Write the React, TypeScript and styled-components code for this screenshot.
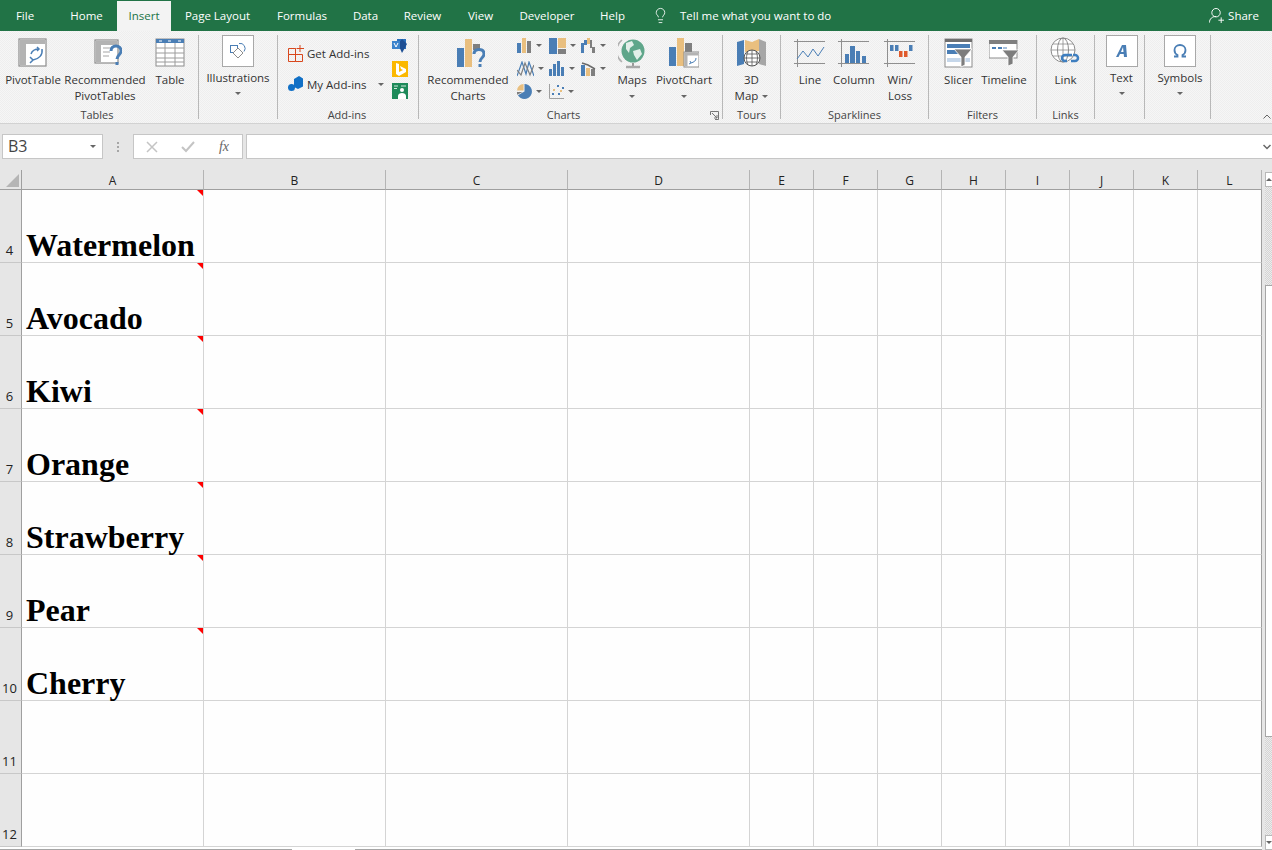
import React from "react"
import styled, { createGlobalStyle } from "styled-components"
import { Lightbulb } from "lucide-react"

const UI_FONT = `"Open Sans", "Noto Sans", "Liberation Sans", sans-serif`
const BLUE = "#4a7eb5"
const GOLD = "#e9bf7f"
const GREY = "#7f7f7f"

const Global = createGlobalStyle`
  html, body {
    margin: 0;
    padding: 0;
    background: #e6e6e6;
  }
  * {
    box-sizing: border-box;
  }
  svg {
    flex: none;
  }
`

const Window = styled.div`
  width: 1272px;
  height: 850px;
  overflow: hidden;
  display: flex;
  flex-direction: column;
  font-family: ${UI_FONT};
  font-size: 11.5px;
  color: #333;
`

/* title tabs */

const TabBar = styled.div`
  height: 31px;
  flex: none;
  background: #217346;
  display: flex;
  align-items: stretch;
  padding-top: 1px;
  color: #fff;
`

const Tab = styled.div<{ $w: number; $active?: boolean }>`
  width: ${(p) => p.$w}px;
  display: flex;
  align-items: center;
  justify-content: center;
  padding-bottom: 1px;
  white-space: nowrap;
  background: ${(p) => (p.$active ? "#f3f3f3" : "transparent")};
  color: ${(p) => (p.$active ? "#217346" : "#fff")};
`

const FileTab = styled(Tab)`
  padding-right: 6px;
`

const TellMe = styled.div`
  display: flex;
  align-items: center;
  gap: 11px;
  margin-left: 14px;
  padding-bottom: 1px;
  flex: 1;
`

const Share = styled.div`
  display: flex;
  align-items: center;
  gap: 4px;
  padding: 0 13px 1px 0;
`

/* ribbon */

const Ribbon = styled.div`
  height: 93px;
  flex: none;
  display: flex;
  padding-top: 4px;
  position: relative;
  border-bottom: 1px solid #d2d2d2;
  background-color: #f4f4f4;
  background-image: repeating-conic-gradient(#eeeeee 0 25%, #f6f6f6 0 50%);
  background-size: 2px 2px;
`

const Group = styled.div<{ $w: number }>`
  width: ${(p) => p.$w}px;
  height: 84px;
  flex: none;
  display: flex;
  flex-direction: column;
  border-right: 1px solid #b8b8b8;
`

const GroupBody = styled.div`
  flex: 1;
  display: flex;
  min-height: 0;
`

const GroupLabel = styled.div<{ $pr?: number }>`
  height: 14px;
  line-height: 14px;
  margin-bottom: -3px;
  padding-right: ${(p) => p.$pr ?? 0}px;
  text-align: center;
  color: #444;
  font-size: 11px;
  position: relative;
`

const Launcher = styled.svg`
  position: absolute;
  right: 3px;
  top: 3px;
`

const CollapseChevron = styled.svg`
  position: absolute;
  right: 1px;
  top: 83px;
`

const BigButton = styled.div<{ $w: number }>`
  width: ${(p) => p.$w}px;
  flex: none;
  display: flex;
  flex-direction: column;
  align-items: center;
`

const IconSlot = styled.div<{ $shift?: number }>`
  height: 35px;
  padding-left: ${(p) => p.$shift ?? 0}px;
  display: flex;
  align-items: center;
  justify-content: center;
`

const ButtonLabel = styled.div`
  line-height: 16px;
  margin-top: 2px;
  text-align: center;
  white-space: nowrap;
`

const Caret = styled.span`
  display: inline-block;
  width: 0;
  height: 0;
  flex: none;
  border-left: 3px solid transparent;
  border-right: 3px solid transparent;
  border-top: 3px solid #666;
`

const CaretLine = styled.div`
  height: 16px;
  display: flex;
  align-items: center;
  justify-content: center;
`

const MapCaret = styled(Caret)`
  margin-left: 4px;
  vertical-align: middle;
`

const Collapsed = styled.div<{ $pl?: number }>`
  flex: 1;
  display: flex;
  flex-direction: column;
  align-items: center;
  padding-left: ${(p) => p.$pl ?? 0}px;
`

const CollapsedBox = styled.div`
  width: 32px;
  height: 32px;
  background: #fff;
  border: 1px solid #a8a8a8;
  display: flex;
  align-items: center;
  justify-content: center;
`

const CollapsedLabel = styled.div`
  margin-top: 3px;
  line-height: 16px;
`

const CollapsedCaret = styled(CaretLine)`
  height: 14px;
`

const StoreColumn = styled.div`
  width: 114px;
  flex: none;
  padding: 10px 0 0 10px;
  display: flex;
  flex-direction: column;
  gap: 15px;
`

const StoreRow = styled.div`
  height: 16px;
  display: flex;
  align-items: center;
  gap: 3px;
  white-space: nowrap;
`

const StoreCaret = styled(Caret)`
  margin-left: 8px;
`

const AppIcons = styled.div`
  display: flex;
  flex-direction: column;
  gap: 6.5px;
  margin-top: 3px;
`

const ChartGrid = styled.div`
  width: 93px;
  flex: none;
  display: grid;
  grid-template-columns: repeat(3, 32px);
  grid-auto-rows: 23px;
  margin-top: -1px;
`

const ChartCell = styled.div`
  display: flex;
  align-items: center;
  gap: 4px;
`

/* formula bar */

const FormulaBar = styled.div`
  height: 46px;
  flex: none;
  display: flex;
  align-items: flex-start;
  padding: 10px 0 0 2px;
  background: #e6e6e6;
`

const NameBox = styled.div`
  width: 101px;
  height: 25px;
  background: #fff;
  border: 1px solid #c6c6c6;
  display: flex;
  align-items: center;
  justify-content: space-between;
  padding: 0 6px 1px 5px;
  font-size: 16px;
  color: #444;
`

const Grip = styled.div`
  width: 30px;
  height: 25px;
  display: flex;
  flex-direction: column;
  align-items: center;
  justify-content: center;
  gap: 2px;
  flex: none;
  & > i {
    width: 2px;
    height: 2px;
    background: #a6a6a6;
  }
`

const FxBox = styled.div`
  width: 110px;
  height: 25px;
  background: #fff;
  border: 1px solid #c6c6c6;
  display: grid;
  grid-template-columns: repeat(3, 36px);
  align-items: center;
  justify-items: center;
  flex: none;
`

const Fx = styled.span`
  font-family: "Liberation Serif", serif;
  font-style: italic;
  font-size: 14px;
  color: #666;
`

const FormulaInput = styled.div`
  flex: 1;
  height: 25px;
  margin-left: 3px;
  background: #fff;
  border: 1px solid #c6c6c6;
  border-right: 0;
  display: flex;
  align-items: center;
  justify-content: flex-end;
  padding-right: 1px;
`

/* sheet */

const Sheet = styled.div`
  flex: 1;
  display: flex;
  min-height: 0;
`

const CellGrid = styled.div`
  width: 1262px;
  flex: none;
  display: grid;
  grid-template-columns: 22px repeat(4, 182px) repeat(8, 64px);
  grid-template-rows: 20px repeat(9, 73px) 3px;
  background: #fff;
`

const Corner = styled.div`
  background: #e6e6e6;
  border-right: 1px solid #9f9f9f;
  border-bottom: 1px solid #9f9f9f;
  position: relative;
  &::after {
    content: "";
    position: absolute;
    right: 2px;
    bottom: 2px;
    border-left: 13px solid transparent;
    border-bottom: 13px solid #b5b5b5;
  }
`

const ColHead = styled.div`
  background: #e6e6e6;
  border-bottom: 1px solid #9f9f9f;
  border-right: 1px solid #b4b4b4;
  text-align: center;
  padding-top: 1px;
  line-height: 19px;
  font-size: 12px;
  color: #222;
`

const RowHead = styled.div`
  background: #e6e6e6;
  border-right: 1px solid #9f9f9f;
  border-bottom: 1px solid #c8c8c8;
  display: flex;
  align-items: flex-end;
  justify-content: center;
  padding: 0 2px 2px 0;
  font-size: 13px;
  line-height: 19px;
  color: #222;
`

const Cell = styled.div<{ $last?: boolean }>`
  background: #fefefe;
  border-right: 1px solid ${(p) => (p.$last ? "#9f9f9f" : "#d4d4d4")};
  border-bottom: 1px solid #d4d4d4;
`

const NameCell = styled(Cell)`
  position: relative;
  display: flex;
  align-items: flex-end;
  padding-left: 4px;
  font-family: "Liberation Serif", serif;
  font-weight: bold;
  font-size: 32px;
  line-height: 34px;
  color: #000;
  white-space: nowrap;
  &::after {
    content: "";
    position: absolute;
    top: 0;
    right: 0;
    border-left: 6px solid transparent;
    border-top: 6px solid #ff0000;
  }
`

const BottomEdge = styled.div`
  grid-column: 1 / -1;
  display: flex;
  justify-content: space-between;
  background: #fff;
  padding-top: 2px;
`

const EdgeLine = styled.div<{ $w: number }>`
  height: 1px;
  background: #a6a6a6;
  width: ${(p) => p.$w}px;
`

const VScroll = styled.div`
  flex: 1;
  display: flex;
  flex-direction: column;
  padding: 2px 0 0 3px;
  background: #e6e6e6;
`

const Track = styled.div`
  height: 98px;
  flex: none;
  background-color: #dcdcdc;
  background-image: repeating-conic-gradient(#d4d4d4 0 25%, #ececec 0 50%);
  background-size: 2px 2px;
`

const Thumb = styled.div`
  height: 452px;
  flex: none;
  background: #fff;
  border: 1px solid #a6a6a6;
  border-right: 0;
`

const ScrollButton = styled.div`
  height: 15px;
  flex: none;
  background: #fff;
  border: 1px solid #b8b8b8;
  border-right: 0;
  display: flex;
  align-items: center;
  justify-content: center;
`

const ArrowUp = styled.span`
  border-left: 3px solid transparent;
  border-right: 3px solid transparent;
  border-bottom: 3px solid #666;
`

const ArrowDown = styled.span`
  border-left: 3px solid transparent;
  border-right: 3px solid transparent;
  border-top: 3px solid #666;
`

/* icons */

const PivotTableIcon = () => (
  <svg width="30" height="30" viewBox="0 0 30 30">
    <rect x="1" y="1" width="27" height="27" fill="#fff" stroke="#8c8c8c" strokeWidth="1.2" />
    <rect x="2" y="2" width="25" height="4" fill="#b3b3b3" />
    <rect x="2" y="6" width="6" height="21" fill="#b3b3b3" />
    <path d="M24 11c1 6-3 10-9 11M12 19l3 3-3 3" fill="none" stroke={BLUE} strokeWidth="1.5" />
    <path d="M13 16c1-3 4-5 8-5M19 9l2 2-2 2" fill="none" stroke={BLUE} strokeWidth="1.5" />
  </svg>
)

const RecommendedPivotIcon = () => (
  <svg width="28" height="28" viewBox="0 0 28 28">
    <rect x="1" y="1" width="23" height="23" fill="#fff" stroke="#8c8c8c" strokeWidth="1.2" />
    <rect x="2" y="2" width="21" height="4" fill="#b3b3b3" />
    <rect x="2" y="6" width="5" height="17" fill="#b3b3b3" />
    <path d="M9 9h9M9 13h7M9 17h6" stroke="#c4c4c4" strokeWidth="1.5" />
    <path d="M17 12c0-3 2-5 5-5s5 2 5 5c0 4-4 4-4 8" fill="none" stroke={BLUE} strokeWidth="3" />
    <rect x="21.5" y="23" width="3" height="3" fill={BLUE} />
  </svg>
)

const TableIcon = () => (
  <svg width="30" height="30" viewBox="0 0 30 30">
    <rect x="1" y="1" width="28" height="27" fill="#fff" stroke="#8c8c8c" />
    <rect x="1" y="1" width="28" height="4" fill={BLUE} />
    <path d="M4 3h3M13 3h3M23 3h3" stroke="#fff" strokeWidth="1" />
    <path d="M1 10h28M1 15h28M1 20h28M1 24h28M10 5v23M20 5v23" stroke="#9c9c9c" strokeWidth="1" />
  </svg>
)

const ShapesIcon = () => (
  <svg width="18" height="18" viewBox="0 0 18 18" fill="none" stroke={BLUE} strokeWidth="1">
    <rect x="1.5" y="3.5" width="7" height="7" />
    <path d="M10 1.5a5 5 0 0 1 5 8" />
    <path d="M9 6l5 5-5 5-5-5z" fill="#fff" stroke="#8c8c8c" />
  </svg>
)

const GetAddInsIcon = () => (
  <svg width="16" height="17" viewBox="0 0 16 17" fill="none" stroke="#d8471c" strokeWidth="1">
    <path d="M.5 3.500h7v6h-7zM.5 9.500h7v7h-7zM7.500 9.500h7v7h-7zM7.500 3.500v6" />
    <path d="M12 0v7M8.500 3.500H16" />
  </svg>
)

const MyAddInsIcon = () => (
  <svg width="16" height="16" viewBox="0 0 16 16">
    <path d="M6 3l5-3 4 2.500v8L10 13 6 11z" fill="#1170c6" />
    <circle cx="3.500" cy="11.500" r="3.500" fill="#1170c6" />
  </svg>
)

const VisioIcon = () => (
  <svg width="16" height="16" viewBox="0 0 16 16">
    <rect x="5" y="1" width="9" height="10" fill="#2a6fbb" />
    <path d="M6 6l4-5 5 5-5 9z" fill="#1d4f94" />
    <rect x="0" y="3" width="8" height="8" fill="#3b83cc" />
    <path d="M2 5l2 4 2-4" stroke="#fff" fill="none" strokeWidth="1" />
  </svg>
)

const BingIcon = () => (
  <svg width="16" height="16" viewBox="0 0 16 16">
    <rect width="16" height="16" fill="#fbb800" />
    <path d="M4 2l3 1v8l4-2-2-1-1-3 6 3v3l-7 4-3-2z" fill="#fff" />
  </svg>
)

const PeopleIcon = () => (
  <svg width="16" height="16" viewBox="0 0 16 16">
    <rect width="16" height="16" fill="#1e8a5a" />
    <path d="M2 3h4M2 5.500h3M9 3h5" stroke="#cfe7da" strokeWidth="1" />
    <circle cx="10" cy="7" r="2" fill="#fff" />
    <path d="M6 16v-3c0-2 2-3 4-3s4 1 4 3v3z" fill="#fff" />
  </svg>
)

const RecommendedChartsIcon = () => (
  <svg width="28" height="28" viewBox="0 0 28 28">
    <rect x="0" y="9" width="7" height="19" fill={BLUE} />
    <rect x="8" y="0" width="7" height="28" fill={GOLD} />
    <rect x="16" y="5" width="7" height="6" fill={GREY} />
    <path d="M17 15c0-3 2-4.500 5-4.500s5 1.500 5 4.500c0 4-4 3.500-4 8" fill="none" stroke={BLUE} strokeWidth="3" />
    <rect x="21.500" y="25" width="3" height="3" fill={BLUE} />
  </svg>
)

const ColumnMini = () => (
  <svg width="15" height="15" viewBox="0 0 15 15">
    <rect x="0" y="5" width="4" height="10" fill={BLUE} />
    <rect x="5" y="0" width="4" height="15" fill={GOLD} />
    <rect x="10" y="3" width="4" height="12" fill={GREY} />
  </svg>
)

const TreemapMini = () => (
  <svg width="17" height="16" viewBox="0 0 17 16">
    <rect x="0" y="0" width="8" height="16" fill={BLUE} />
    <rect x="9" y="0" width="8" height="10" fill={GOLD} />
    <rect x="9" y="11" width="8" height="5" fill={GREY} />
  </svg>
)

const WaterfallMini = () => (
  <svg width="15" height="15" viewBox="0 0 15 15">
    <rect x="0" y="5" width="3" height="10" fill={BLUE} />
    <rect x="3" y="2" width="3" height="5" fill={BLUE} />
    <rect x="6" y="0" width="3" height="6" fill={GOLD} />
    <rect x="9" y="2" width="2" height="8" fill={GREY} />
    <rect x="11" y="9" width="3" height="6" fill={GREY} />
  </svg>
)

const LineMini = () => (
  <svg width="17" height="16" viewBox="0 0 17 16" fill="none" strokeWidth="1.2">
    <path d="M0 15L5 1l4 12 3-12 5 14" stroke={BLUE} />
    <path d="M0 9l4 5L8 2l5 12 4-10" stroke={GREY} />
  </svg>
)

const BarsMini = () => (
  <svg width="16" height="15" viewBox="0 0 16 15">
    <rect x="0" y="8" width="3" height="7" fill={BLUE} />
    <rect x="4" y="3" width="3" height="12" fill={BLUE} />
    <rect x="8" y="0" width="3" height="15" fill={BLUE} />
    <rect x="12" y="6" width="3" height="9" fill={BLUE} />
  </svg>
)

const ComboMini = () => (
  <svg width="15" height="15" viewBox="0 0 15 15">
    <rect x="0" y="4" width="4" height="11" fill={BLUE} />
    <rect x="5" y="7" width="4" height="8" fill={GOLD} />
    <rect x="10" y="8" width="4" height="7" fill={GREY} />
    <path d="M1 2l6 2 7 4" stroke="#6a6a6a" strokeWidth="1.500" fill="none" />
  </svg>
)

const PieMini = () => (
  <svg width="15" height="15" viewBox="0 0 16 16">
    <path d="M8 0a8 8 0 1 1-7 12l7-4z" fill={BLUE} />
    <path d="M7 0v7H0a7 7 0 0 1 7-7z" fill={GOLD} />
    <path d="M0 8.500h6l-6 3z" fill={GREY} />
  </svg>
)

const ScatterMini = () => (
  <svg width="15" height="15" viewBox="0 0 15 15">
    <path d="M.5 0v14.500H15" stroke="#a0a0a0" fill="none" />
    <path d="M8 1h2v2H8zM3 9h2v2H3z" fill={BLUE} />
    <path d="M4 5h2v2H4zM11 6h2v2h-2z" fill={GOLD} />
    <path d="M9 9h2v2H9zM13 3h2v2h-2z" fill={BLUE} />
  </svg>
)

const GlobeIcon = () => (
  <svg width="28" height="32" viewBox="0 0 28 32">
    <path d="M4 3a14 14 0 0 0 0 22" fill="none" stroke="#b0b0b0" strokeWidth="1.500" />
    <circle cx="15" cy="14" r="11.500" fill="#5fa68a" />
    <path d="M8 6l6-2 2 4-4 3-1 5-3-4zM15 14l7-2 2 5-5 6-3-5z" fill="#e3efe9" />
    <path d="M15 26v3" stroke="#999" strokeWidth="2" />
    <path d="M8 30h14" stroke="#a8a8a8" strokeWidth="2.500" />
  </svg>
)

const PivotChartIcon = () => (
  <svg width="30" height="30" viewBox="0 0 30 30">
    <rect x="0" y="9" width="7" height="19" fill={BLUE} />
    <rect x="8" y="0" width="7" height="28" fill={GOLD} />
    <rect x="16" y="5" width="7" height="10" fill={GREY} />
    <rect x="15" y="14" width="15" height="15" fill="#fff" stroke="#8c8c8c" />
    <rect x="15.500" y="14.500" width="14" height="3" fill="#b3b3b3" />
    <rect x="15.500" y="14.500" width="3" height="14" fill="#b3b3b3" />
    <path d="M27 20c0 3-2 4-5 5M21 23l1 2-2 1" fill="none" stroke={BLUE} strokeWidth="1" />
  </svg>
)

const MapIcon = () => (
  <svg width="30" height="30" viewBox="0 0 30 30">
    <path d="M0 4l7-2v24l-7 2z" fill={BLUE} />
    <path d="M8 2l7 2v10H8z" fill={GOLD} />
    <path d="M15 4l7-3v12h-7z" fill={GOLD} />
    <path d="M22 1l7 3v24l-7-2z" fill="#a6a6a6" />
    <circle cx="15" cy="20" r="8" fill="#fff" stroke="#555" />
    <path d="M7 20h16M15 12v16M9 16h12M9 24h12M11 13.500c-2 4-2 9 0 13M19 13.500c2 4 2 9 0 13" fill="none" stroke="#555" strokeWidth=".8" />
  </svg>
)

const SparkFrame = ({ children }: { children: React.ReactNode }) => (
  <svg width="32" height="28" viewBox="0 0 32 28">
    <path d="M0 2.500h31M0 24.500h31M3.500 0v28" stroke="#8f8f8f" strokeWidth="1" />
    {children}
  </svg>
)

const WinLossIcon = () => (
  <SparkFrame>
    <rect x="6" y="6" width="3.500" height="6" fill={BLUE} />
    <rect x="11" y="6" width="3.500" height="6" fill={BLUE} />
    <rect x="15" y="12" width="3.500" height="6" fill="#e05a2b" />
    <rect x="20" y="12" width="3.500" height="6" fill="#e05a2b" />
    <rect x="25" y="6" width="3.500" height="6" fill={BLUE} />
  </SparkFrame>
)

const SlicerIcon = () => (
  <svg width="30" height="30" viewBox="0 0 30 30">
    <rect x="1" y="1" width="27" height="28" fill="#fff" stroke="#8c8c8c" />
    <rect x="1" y="1" width="27" height="3" fill="#6f6f6f" />
    <rect x="3" y="6" width="23" height="4" fill={BLUE} />
    <rect x="3" y="12" width="14" height="4" fill={BLUE} />
    <rect x="3" y="20" width="23" height="4" fill="#c6d7ea" />
    <path d="M10 11h18l-7 8v8l-4 2V19z" fill="#7d7d7d" stroke="#fff" strokeWidth=".8" />
  </svg>
)

const TimelineIcon = () => (
  <svg width="30" height="26" viewBox="0 0 30 26">
    <rect x="0" y="0" width="28" height="18" fill="#fff" stroke="#8c8c8c" />
    <rect x="0" y="0" width="28" height="4" fill="#7f7f7f" />
    <path d="M3 8h4M9 8h4" stroke={BLUE} strokeWidth="2" />
    <path d="M14 8h4" stroke="#a6bfdb" strokeWidth="2" />
    <path d="M13 10h17l-6 7v7l-5 2v-9z" fill="#7d7d7d" stroke="#fff" strokeWidth=".8" />
  </svg>
)

const LinkIcon = () => (
  <svg width="32" height="31" viewBox="0 0 32 31">
    <circle cx="13" cy="13" r="12" fill="#fff" stroke="#8c8c8c" />
    <ellipse cx="13" cy="13" rx="5.500" ry="12" fill="none" stroke="#8c8c8c" />
    <path d="M13 1v24M1 13h24M3 7h20M3 19h20" stroke="#8c8c8c" strokeWidth=".8" />
    <path d="M17 24h-2a3 3 0 0 1 0-6h7M21 24h4a3 3 0 0 0 0-6h-2" fill="none" stroke="#3f7fc0" strokeWidth="2.500" />
  </svg>
)

const App = () => {
  const columns = ["A", "B", "C", "D", "E", "F", "G", "H", "I", "J", "K", "L"]
  const rows: { n: number; name?: string }[] = [
    { n: 4, name: "Watermelon" },
    { n: 5, name: "Avocado" },
    { n: 6, name: "Kiwi" },
    { n: 7, name: "Orange" },
    { n: 8, name: "Strawberry" },
    { n: 9, name: "Pear" },
    { n: 10, name: "Cherry" },
    { n: 11 },
    { n: 12 },
  ]
  return (
    <Window>
      <Global />
      <TabBar>
        <FileTab $w={56}>File</FileTab>
        <Tab $w={61}>Home</Tab>
        <Tab $w={54} $active>Insert</Tab>
        <Tab $w={93}>Page Layout</Tab>
        <Tab $w={76}>Formulas</Tab>
        <Tab $w={51}>Data</Tab>
        <Tab $w={63}>Review</Tab>
        <Tab $w={53}>View</Tab>
        <Tab $w={80}>Developer</Tab>
        <Tab $w={51}>Help</Tab>
        <TellMe>
          <Lightbulb size={17} strokeWidth={1.2} />
          <span>Tell me what you want to do</span>
        </TellMe>
        <Share>
          <svg width="15" height="17" viewBox="0 0 16 17" fill="none" stroke="#fff" strokeWidth="1">
            <circle cx="7.500" cy="5.500" r="4.500" />
            <path d="M.5 16c0-4 3-6.500 7-6.500M10 13.500h6M13 10.500v6" />
          </svg>
          <span>Share</span>
        </Share>
      </TabBar>

      <Ribbon>
        <Group $w={199}>
          <GroupBody>
            <BigButton $w={66}>
              <IconSlot><PivotTableIcon /></IconSlot>
              <ButtonLabel>PivotTable</ButtonLabel>
            </BigButton>
            <BigButton $w={78}>
              <IconSlot $shift={6}><RecommendedPivotIcon /></IconSlot>
              <ButtonLabel>Recommended<br />PivotTables</ButtonLabel>
            </BigButton>
            <BigButton $w={52}>
              <IconSlot><TableIcon /></IconSlot>
              <ButtonLabel>Table</ButtonLabel>
            </BigButton>
          </GroupBody>
          <GroupLabel $pr={4}>Tables</GroupLabel>
        </Group>

        <Group $w={79}>
          <GroupBody>
            <Collapsed>
              <CollapsedBox><ShapesIcon /></CollapsedBox>
              <CollapsedLabel>Illustrations</CollapsedLabel>
              <CollapsedCaret><Caret /></CollapsedCaret>
            </Collapsed>
          </GroupBody>
          <GroupLabel>&nbsp;</GroupLabel>
        </Group>

        <Group $w={141}>
          <GroupBody>
            <StoreColumn>
              <StoreRow><GetAddInsIcon /><span>Get Add-ins</span></StoreRow>
              <StoreRow><MyAddInsIcon /><span>My Add-ins</span><StoreCaret /></StoreRow>
            </StoreColumn>
            <AppIcons>
              <VisioIcon />
              <BingIcon />
              <PeopleIcon />
            </AppIcons>
          </GroupBody>
          <GroupLabel $pr={2}>Add-ins</GroupLabel>
        </Group>

        <Group $w={304}>
          <GroupBody>
            <BigButton $w={98}>
              <IconSlot $shift={6}><RecommendedChartsIcon /></IconSlot>
              <ButtonLabel>Recommended<br />Charts</ButtonLabel>
            </BigButton>
            <ChartGrid>
              <ChartCell><ColumnMini /><Caret /></ChartCell>
              <ChartCell><TreemapMini /><Caret /></ChartCell>
              <ChartCell><WaterfallMini /><Caret /></ChartCell>
              <ChartCell><LineMini /><Caret /></ChartCell>
              <ChartCell><BarsMini /><Caret /></ChartCell>
              <ChartCell><ComboMini /><Caret /></ChartCell>
              <ChartCell><PieMini /><Caret /></ChartCell>
              <ChartCell><ScatterMini /><Caret /></ChartCell>
            </ChartGrid>
            <BigButton $w={44}>
              <IconSlot><GlobeIcon /></IconSlot>
              <ButtonLabel>Maps</ButtonLabel>
              <CaretLine><Caret /></CaretLine>
            </BigButton>
            <BigButton $w={60}>
              <IconSlot><PivotChartIcon /></IconSlot>
              <ButtonLabel>PivotChart</ButtonLabel>
              <CaretLine><Caret /></CaretLine>
            </BigButton>
          </GroupBody>
          <GroupLabel $pr={14}>
            Charts
            <Launcher width="9" height="9" viewBox="0 0 9 9" fill="none" stroke="#777">
              <path d="M.5 4V.5H8.500V8.500H5M2 2l5 5M7 4v3H4" />
            </Launcher>
          </GroupLabel>
        </Group>

        <Group $w={58}>
          <GroupBody>
            <BigButton $w={57}>
              <IconSlot><MapIcon /></IconSlot>
              <ButtonLabel>3D<br />Map<MapCaret /></ButtonLabel>
            </BigButton>
          </GroupBody>
          <GroupLabel>Tours</GroupLabel>
        </Group>

        <Group $w={148}>
          <GroupBody>
            <BigButton $w={58}>
              <IconSlot>
                <SparkFrame>
                  <path d="M3 20l6-8 5 6 5-8 5 7 6-9" fill="none" stroke={BLUE} />
                </SparkFrame>
              </IconSlot>
              <ButtonLabel>Line</ButtonLabel>
            </BigButton>
            <BigButton $w={30}>
              <IconSlot>
                <SparkFrame>
                  <rect x="7" y="15" width="4" height="9" fill={BLUE} />
                  <rect x="12" y="7" width="5" height="17" fill={BLUE} />
                  <rect x="18" y="12" width="4" height="12" fill={BLUE} />
                  <rect x="24" y="17" width="4" height="7" fill={BLUE} />
                </SparkFrame>
              </IconSlot>
              <ButtonLabel>Column</ButtonLabel>
            </BigButton>
            <BigButton $w={62}>
              <IconSlot><WinLossIcon /></IconSlot>
              <ButtonLabel>Win/<br />Loss</ButtonLabel>
            </BigButton>
          </GroupBody>
          <GroupLabel>Sparklines</GroupLabel>
        </Group>

        <Group $w={108}>
          <GroupBody>
            <BigButton $w={59}>
              <IconSlot><SlicerIcon /></IconSlot>
              <ButtonLabel>Slicer</ButtonLabel>
            </BigButton>
            <BigButton $w={32}>
              <IconSlot><TimelineIcon /></IconSlot>
              <ButtonLabel>Timeline</ButtonLabel>
            </BigButton>
          </GroupBody>
          <GroupLabel>Filters</GroupLabel>
        </Group>

        <Group $w={58}>
          <GroupBody>
            <BigButton $w={57}>
              <IconSlot><LinkIcon /></IconSlot>
              <ButtonLabel>Link</ButtonLabel>
            </BigButton>
          </GroupBody>
          <GroupLabel>Links</GroupLabel>
        </Group>

        <Group $w={50}>
          <GroupBody>
            <Collapsed $pl={4}>
              <CollapsedBox>
                <svg width="14" height="14" viewBox="0 0 14 14">
                  <path d="M1 13L7 1h4l1 12H9l-.3-3H5l-1.500 3zM6 8h2.500L8 3z" fill={BLUE} fillRule="evenodd" />
                </svg>
              </CollapsedBox>
              <CollapsedLabel>Text</CollapsedLabel>
              <CollapsedCaret><Caret /></CollapsedCaret>
            </Collapsed>
          </GroupBody>
          <GroupLabel>&nbsp;</GroupLabel>
        </Group>

        <Group $w={66}>
          <GroupBody>
            <Collapsed $pl={5}>
              <CollapsedBox>
                <svg width="14" height="14" viewBox="0 0 14 14" fill="none" stroke={BLUE} strokeWidth="1.800">
                  <path d="M1 12.500h3.500V11C2.500 10 1.500 8 1.500 6c0-3 2.500-5 5.500-5s5.500 2 5.500 5c0 2-1 4-3 5v1.500H13" />
                </svg>
              </CollapsedBox>
              <CollapsedLabel>Symbols</CollapsedLabel>
              <CollapsedCaret><Caret /></CollapsedCaret>
            </Collapsed>
          </GroupBody>
          <GroupLabel>&nbsp;</GroupLabel>
        </Group>

        <CollapseChevron width="8" height="5" viewBox="0 0 8 5" fill="none" stroke="#666">
          <path d="M.5 4.500L4 1l3.500 3.500" />
        </CollapseChevron>
      </Ribbon>

      <FormulaBar>
        <NameBox>
          <span>B3</span>
          <ArrowDown />
        </NameBox>
        <Grip><i /><i /><i /></Grip>
        <FxBox>
          <svg width="12" height="12" viewBox="0 0 12 12" stroke="#c4c4c4" strokeWidth="1.500">
            <path d="M1 1l10 10M11 1L1 11" />
          </svg>
          <svg width="14" height="12" viewBox="0 0 14 12" fill="none" stroke="#c4c4c4" strokeWidth="2">
            <path d="M1 6l4 4 8-9" />
          </svg>
          <Fx>fx</Fx>
        </FxBox>
        <FormulaInput>
          <svg width="8" height="6" viewBox="0 0 8 6" fill="none" stroke="#666" strokeWidth="1.500">
            <path d="M.5 1L4 4.500 7.500 1" />
          </svg>
        </FormulaInput>
      </FormulaBar>

      <Sheet>
        <CellGrid>
          <Corner />
          {columns.map((c) => (
            <ColHead key={c}>{c}</ColHead>
          ))}
          {rows.map((row) => (
            <React.Fragment key={row.n}>
              <RowHead>{row.n}</RowHead>
              {columns.map((c, i) =>
                c === "A" && row.name ? (
                  <NameCell key={c}>{row.name}</NameCell>
                ) : (
                  <Cell key={c} $last={i === columns.length - 1} />
                ),
              )}
            </React.Fragment>
          ))}
          <BottomEdge>
            <EdgeLine $w={292} />
            <EdgeLine $w={907} />
          </BottomEdge>
        </CellGrid>
        <VScroll>
          <ScrollButton><ArrowUp /></ScrollButton>
          <Track />
          <Thumb />
          <Track />
          <ScrollButton><ArrowDown /></ScrollButton>
        </VScroll>
      </Sheet>
    </Window>
  )
}

export default App
